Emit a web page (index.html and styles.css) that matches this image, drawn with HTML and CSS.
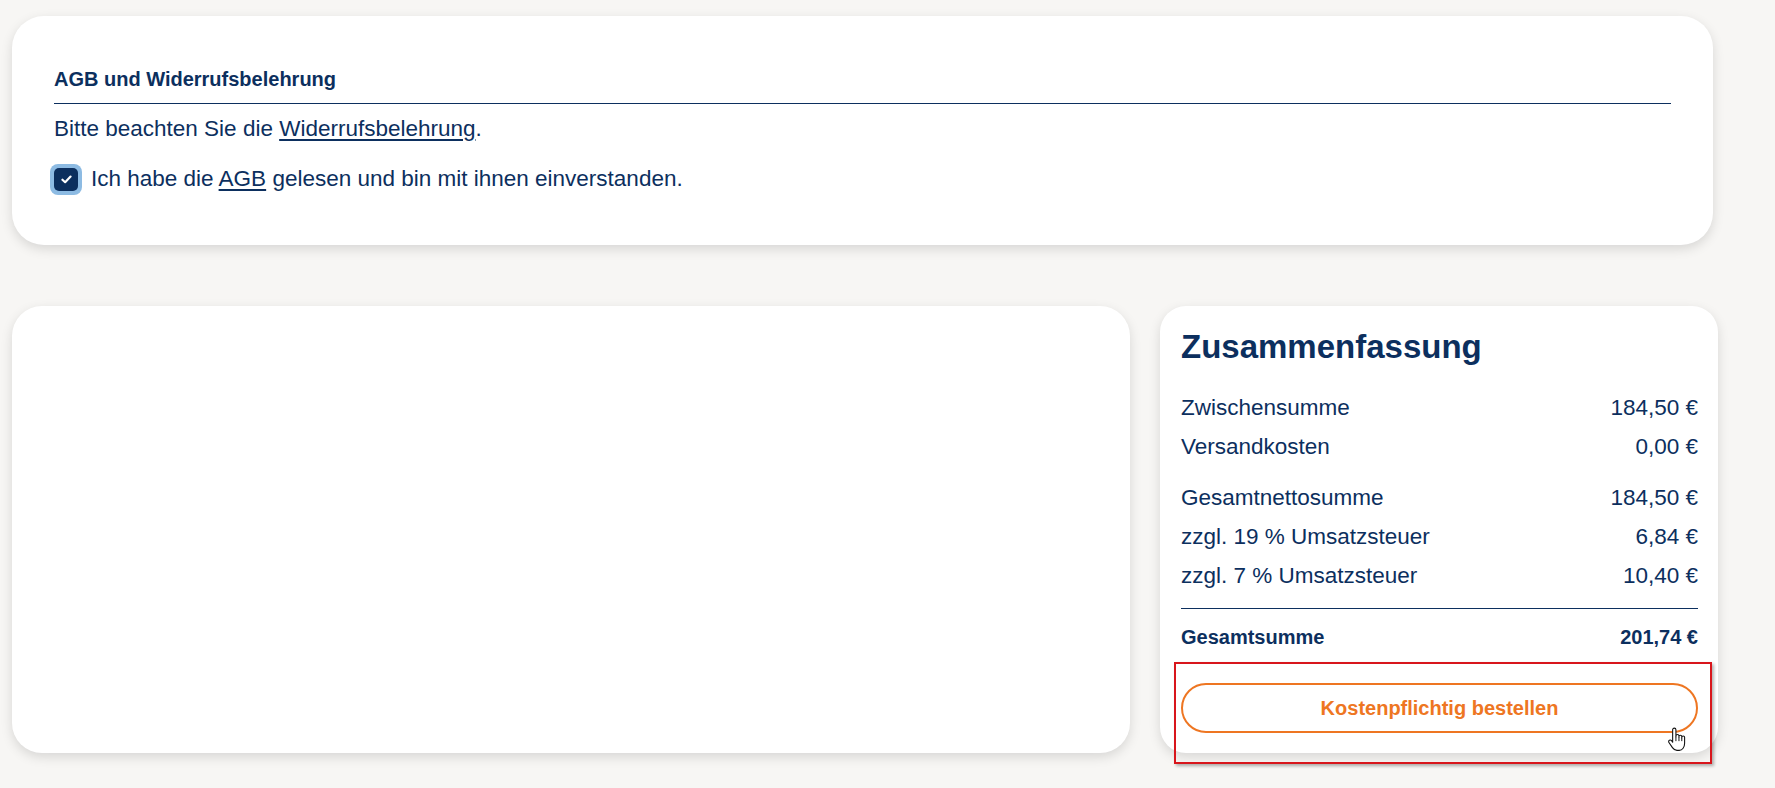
FILE: index.html
```html
<!DOCTYPE html>
<html lang="de">
<head>
<meta charset="utf-8">
<title>Kasse</title>
<link rel="stylesheet" href="styles.css">
</head>
<body>
<main class="page">
  <section class="card terms">
    <h2 class="terms-title">AGB und Widerrufsbelehrung</h2>
    <p class="terms-text">Bitte beachten Sie die <a href="#" class="link">Widerrufsbelehrung</a>.</p>
    <label class="check-row">
      <span class="check-ring">
        <span class="check-box">
          <svg class="check-icon" viewBox="0 0 12 10" width="11" height="9" aria-hidden="true">
            <path d="M1.5 5.2 L4.5 8 L10.5 1.8" fill="none" stroke="#ffffff" stroke-width="2.4" stroke-linecap="round" stroke-linejoin="round"/>
          </svg>
        </span>
      </span>
      <span class="check-label">Ich habe die <a href="#" class="link">AGB</a> gelesen und bin mit ihnen einverstanden.</span>
    </label>
  </section>

  <div class="bottom-row">
    <section class="card blank"></section>
    <aside class="card summary">
      <h1 class="summary-title">Zusammenfassung</h1>
      <div class="rows">
        <div class="row"><span>Zwischensumme</span><span>184,50 €</span></div>
        <div class="row"><span>Versandkosten</span><span>0,00 €</span></div>
      </div>
      <div class="rows rows-tax">
        <div class="row"><span>Gesamtnettosumme</span><span>184,50 €</span></div>
        <div class="row"><span>zzgl. 19 % Umsatzsteuer</span><span>6,84 €</span></div>
        <div class="row"><span>zzgl. 7 % Umsatzsteuer</span><span>10,40 €</span></div>
      </div>
      <div class="row total"><span>Gesamtsumme</span><span>201,74 €</span></div>
      <button class="order-btn" type="button">Kostenpflichtig bestellen</button>
      <div class="highlight"></div>
      <svg class="cursor" viewBox="0 0 18 23" width="20" height="25" aria-hidden="true">
        <path d="M6.5 1 C7.4 1 8 1.6 8 2.5 V9 V8.2 C8.2 7.4 8.8 6.9 9.5 6.9 C10.2 6.9 10.8 7.4 10.8 8.2 V9.5 V8.8 C10.8 8.1 11.4 7.6 12.1 7.6 C12.8 7.6 13.4 8.1 13.4 8.8 V10 V9.5 C13.4 8.8 14 8.3 14.7 8.3 C15.4 8.3 16 8.8 16 9.5 V15 C16 18.5 14 21.5 11 21.5 H9 C7 21.5 5.8 20.5 4.8 19 L1.6 14.3 C1.1 13.6 1.3 12.6 2 12.2 C2.7 11.8 3.5 12 4 12.6 L5 14 V2.5 C5 1.6 5.6 1 6.5 1 Z" fill="#ffffff" stroke="#111111" stroke-width="1" stroke-linejoin="round"/>
        <path d="M8 9 V13 M10.8 9.5 V13 M13.4 10 V13" stroke="#111111" stroke-width="0.9" fill="none"/>
      </svg>
    </aside>
  </div>
</main>
</body>
</html>
```
FILE: styles.css
```css
* { box-sizing: border-box; }

html, body {
  margin: 0;
  padding: 0;
  background: #f7f6f4;
}

body {
  font-family: "Liberation Sans", Arial, sans-serif;
  color: #0c2f5e;
  min-height: 788px;
}

.page {
  width: 1706px;
  margin-left: 12px;
  padding-top: 16px;
  padding-bottom: 35px;
}

.card {
  background: #ffffff;
  box-shadow: 0 4px 12px rgba(0, 0, 0, 0.13);
}

/* Terms card */
.terms {
  width: 1701px;
  height: 229px;
  border-radius: 32px;
  padding: 51px 42px 0 42px;
}

.terms-title {
  margin: 0;
  font-size: 20px;
  font-weight: 700;
  line-height: 24px;
  padding-bottom: 12px;
  border-bottom: 1px solid #0c2f5e;
}

.terms-text {
  margin: 11px 0 0 0;
  font-size: 22.5px;
  line-height: 28px;
}

.link {
  color: #0c2f5e;
  text-decoration: underline;
  text-decoration-thickness: 2px;
  text-underline-offset: 3px;
}

.check-row {
  display: flex;
  align-items: center;
  gap: 9px;
  margin-top: 20px;
  margin-left: -4px;
  font-size: 22.5px;
  line-height: 32px;
}

.check-ring {
  width: 32px;
  height: 31px;
  border-radius: 8px;
  background: #8dbbe3;
  display: flex;
  align-items: center;
  justify-content: center;
  flex: none;
}

.check-box {
  width: 24px;
  height: 23px;
  border-radius: 5px;
  background: #0c2f5e;
  display: flex;
  align-items: center;
  justify-content: center;
}

.check-icon { display: block; }

/* Bottom row */
.bottom-row {
  display: flex;
  gap: 30px;
  margin-top: 61px;
}

.blank {
  width: 1118px;
  height: 447px;
  border-radius: 30px;
}

.summary {
  position: relative;
  width: 558px;
  height: 447px;
  border-radius: 26px;
  padding: 21px 20px 20px 21px;
}

.summary-title {
  margin: 0;
  font-size: 33px;
  font-weight: 700;
  line-height: 40px;
}

.rows {
  margin-top: 21px;
}

.rows-tax {
  margin-top: 12px;
}

.row {
  display: flex;
  justify-content: space-between;
  font-size: 22.5px;
  line-height: 39px;
}

.total {
  margin-top: 13px;
  border-top: 1px solid #0c2f5e;
  padding-top: 13px;
  font-size: 20px;
  font-weight: 700;
  line-height: 30px;
}

.order-btn {
  display: block;
  width: 100%;
  height: 50px;
  margin-top: 31px;
  border: 2px solid #ee7622;
  border-radius: 25px;
  background: #ffffff;
  color: #ee7622;
  font-family: "Liberation Sans", Arial, sans-serif;
  font-size: 20px;
  font-weight: 700;
  cursor: pointer;
}

.highlight {
  position: absolute;
  left: 14px;
  top: 356px;
  width: 538px;
  height: 102px;
  border: 2.5px solid #d8161c;
  box-shadow: 2px 2px 3px rgba(0, 0, 0, 0.3);
  pointer-events: none;
}

.cursor {
  position: absolute;
  left: 507px;
  top: 421px;
}
```
